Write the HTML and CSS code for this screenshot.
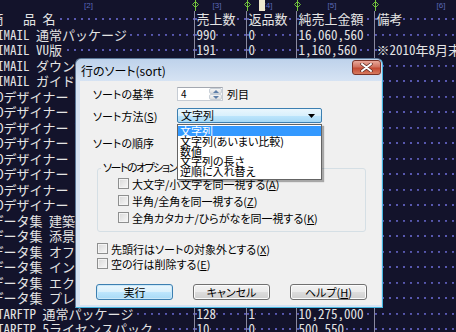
FILE: index.html
```html
<!DOCTYPE html>
<html lang="ja">
<head>
    <meta charset="UTF-8">
    <title>行のソート</title>
    <link rel="stylesheet" href="styles.css">
</head>
<body>
<div class="editor">
    <div class="ruler">
        <div class="seg c1">[2]<svg class="mark" width="9" height="11" viewBox="0 0 9 11"><path d="M4.5 0V11M4.5 1.5L7.5 4.5L4.5 7.5L1.5 4.5Z" fill="none" stroke="#72c43c" stroke-width="1"/></svg></div>
        <div class="seg c2">[3]<svg class="mark" width="9" height="11" viewBox="0 0 9 11"><path d="M4.5 0V11M4.5 1.5L7.5 4.5L4.5 7.5L1.5 4.5Z" fill="none" stroke="#72c43c" stroke-width="1"/></svg></div>
        <div class="seg c3"><span class="cursor"></span>[4]<svg class="mark" width="9" height="11" viewBox="0 0 9 11"><path d="M4.5 0V11M4.5 1.5L7.5 4.5L4.5 7.5L1.5 4.5Z" fill="none" stroke="#72c43c" stroke-width="1"/></svg></div>
        <div class="seg c4">[5]<svg class="mark" width="9" height="11" viewBox="0 0 9 11"><path d="M4.5 0V11M4.5 1.5L7.5 4.5L4.5 7.5L1.5 4.5Z" fill="none" stroke="#72c43c" stroke-width="1"/></svg></div>
        <div class="seg c5">[6]</div>
    </div>
    <div class="sheet">
        <div class="row"><div class="cell c1"><span>商　 品 名</span></div><div class="cell c2"><span>売上数</span></div><div class="cell c3"><span>返品数</span></div><div class="cell c4"><span>純売上金額</span></div><div class="cell c5"><span>備考</span></div></div>
        <div class="row"><div class="cell c1"><span> IMAIL 通常パッケージ</span></div><div class="cell c2"><span>990</span></div><div class="cell c3"><span>0</span></div><div class="cell c4"><span>16,060,560</span></div><div class="cell c5"></div></div>
        <div class="row"><div class="cell c1"><span> IMAIL VU版</span></div><div class="cell c2"><span>191</span></div><div class="cell c3"><span>0</span></div><div class="cell c4"><span>1,160,560</span></div><div class="cell c5"><span>※2010年8月末で販売終了</span></div></div>
        <div class="row"><div class="cell c1"><span> IMAIL ダウンロード版</span></div><div class="cell c2"><span>352</span></div><div class="cell c3"><span>0</span></div><div class="cell c4"><span>4,224,000</span></div><div class="cell c5"></div></div>
        <div class="row"><div class="cell c1"><span> IMAIL ガイドブック</span></div><div class="cell c2"><span>87</span></div><div class="cell c3"><span>2</span></div><div class="cell c4"><span>212,500</span></div><div class="cell c5"></div></div>
        <div class="row"><div class="cell c1"><span> Dデザイナー 通常版</span></div><div class="cell c2"><span>64</span></div><div class="cell c3"><span>0</span></div><div class="cell c4"><span>3,520,000</span></div><div class="cell c5"></div></div>
        <div class="row"><div class="cell c1"><span> Dデザイナー 学生版</span></div><div class="cell c2"><span>21</span></div><div class="cell c3"><span>0</span></div><div class="cell c4"><span>420,000</span></div><div class="cell c5"></div></div>
        <div class="row"><div class="cell c1"><span> Dデザイナー VU版</span></div><div class="cell c2"><span>45</span></div><div class="cell c3"><span>1</span></div><div class="cell c4"><span>1,100,000</span></div><div class="cell c5"></div></div>
        <div class="row"><div class="cell c1"><span> Dデザイナー 5ライセンス</span></div><div class="cell c2"><span>8</span></div><div class="cell c3"><span>0</span></div><div class="cell c4"><span>1,760,000</span></div><div class="cell c5"></div></div>
        <div class="row"><div class="cell c1"><span> Dデザイナー 10ライセンス</span></div><div class="cell c2"><span>3</span></div><div class="cell c3"><span>0</span></div><div class="cell c4"><span>1,200,000</span></div><div class="cell c5"></div></div>
        <div class="row"><div class="cell c1"><span> Dデザイナー 入門書</span></div><div class="cell c2"><span>110</span></div><div class="cell c3"><span>4</span></div><div class="cell c4"><span>312,000</span></div><div class="cell c5"></div></div>
        <div class="row"><div class="cell c1"><span> Dデザイナー 活用ガイド</span></div><div class="cell c2"><span>76</span></div><div class="cell c3"><span>0</span></div><div class="cell c4"><span>228,000</span></div><div class="cell c5"></div></div>
        <div class="row"><div class="cell c1"><span> Dデザイナー 素材集</span></div><div class="cell c2"><span>52</span></div><div class="cell c3"><span>0</span></div><div class="cell c4"><span>156,000</span></div><div class="cell c5"></div></div>
        <div class="row"><div class="cell c1"><span>データ集 建築パーツ</span></div><div class="cell c2"><span>58</span></div><div class="cell c3"><span>0</span></div><div class="cell c4"><span>580,000</span></div><div class="cell c5"></div></div>
        <div class="row"><div class="cell c1"><span>データ集 添景</span></div><div class="cell c2"><span>42</span></div><div class="cell c3"><span>0</span></div><div class="cell c4"><span>420,000</span></div><div class="cell c5"></div></div>
        <div class="row"><div class="cell c1"><span>データ集 オフィス</span></div><div class="cell c2"><span>35</span></div><div class="cell c3"><span>1</span></div><div class="cell c4"><span>340,000</span></div><div class="cell c5"></div></div>
        <div class="row"><div class="cell c1"><span>データ集 インテリア</span></div><div class="cell c2"><span>39</span></div><div class="cell c3"><span>0</span></div><div class="cell c4"><span>390,000</span></div><div class="cell c5"></div></div>
        <div class="row"><div class="cell c1"><span>データ集 エクステリア</span></div><div class="cell c2"><span>27</span></div><div class="cell c3"><span>0</span></div><div class="cell c4"><span>270,000</span></div><div class="cell c5"></div></div>
        <div class="row"><div class="cell c1"><span>データ集 プレゼン</span></div><div class="cell c2"><span>19</span></div><div class="cell c3"><span>0</span></div><div class="cell c4"><span>190,000</span></div><div class="cell c5"></div></div>
        <div class="row"><div class="cell c1"><span> TARFTP 通常パッケージ</span></div><div class="cell c2"><span>128</span></div><div class="cell c3"><span>1</span></div><div class="cell c4"><span>10,275,000</span></div><div class="cell c5"></div></div>
        <div class="row"><div class="cell c1"><span> TARFTP 5ライセンスパック</span></div><div class="cell c2"><span>10</span></div><div class="cell c3"><span>0</span></div><div class="cell c4"><span>500,550</span></div><div class="cell c5"></div></div>
    </div>
</div>

<div class="dialog">
    <div class="titlebar">
        <span class="title">行のソート(sort)</span>
        <span class="close"><svg width="13" height="9" viewBox="0 0 13 9"><path d="M2 1L11 8M11 1L2 8" stroke="#5a2a22" stroke-width="3.4" stroke-linecap="round"/><path d="M2 1L11 8M11 1L2 8" stroke="#fff" stroke-width="2" stroke-linecap="round"/></svg></span>
    </div>
    <div class="client">
        <div class="field f1">
            <span class="lbl">ソートの基準</span>
            <span class="spin"><span class="spin-val">4</span><span class="spin-btns"><i class="up"></i><i class="down"></i></span></span>
            <span class="unit">列目</span>
        </div>
        <div class="field f2">
            <span class="lbl">ソート方法(<u>S</u>)</span>
            <span class="combo focus">文字列<svg class="arrow" width="7" height="4" viewBox="0 0 7 4"><path d="M0 0H7L3.5 4Z" fill="#000"/></svg></span>
        </div>
        <div class="field f3">
            <span class="lbl">ソートの順序</span>
            <span class="combo">昇順</span>
        </div>
        <fieldset class="group">
            <legend>ソートのオプション</legend>
            <label class="check"><span class="box"></span>大文字/小文字を同一視する(<u>A</u>)</label>
            <label class="check"><span class="box"></span>半角/全角を同一視する(<u>Z</u>)</label>
            <label class="check"><span class="box"></span>全角カタカナ/ひらがなを同一視する(<u>K</u>)</label>
        </fieldset>
        <label class="check solo first"><span class="box"></span>先頭行はソートの対象外とする(<u>X</u>)</label>
        <label class="check solo"><span class="box"></span>空の行は削除する(<u>E</u>)</label>
        <div class="buttons">
            <span class="btn default">実行</span>
            <span class="btn">キャンセル</span>
            <span class="btn">ヘルプ(<u>H</u>)</span>
        </div>
        <ul class="droplist">
            <li class="sel">文字列</li>
            <li>文字列(あいまい比較)</li>
            <li>数値</li>
            <li>文字列の長さ</li>
            <li>逆順に入れ替え</li>
        </ul>
    </div>
</div>
</body>
</html>
```

FILE: styles.css
```css
/* General */
body {
    margin: 0;
    width: 456px;
    height: 332px;
    overflow: hidden;
    position: relative;
    background-color: #13132b;
}

/* Editor behind the dialog */
.editor {
    margin-left: -10px;
    color: #e4e4e4;
    font-family: "Noto Sans Mono CJK JP", "Noto Sans CJK JP", monospace;
    font-size: 13px;
    line-height: 15.5px;
}

.ruler {
    display: flex;
    height: 11px;
    font-family: "Liberation Sans", sans-serif;
    font-size: 8px;
    line-height: 11px;
    color: #5a68b8;
}

.seg {
    flex: none;
    position: relative;
    box-sizing: border-box;
    padding-right: 8px;
    text-align: center;
}

.c1 { width: 205px; }
.c2 { width: 52px; }
.c3 { width: 50px; }
.c4 { width: 78px; }
.c5 { width: 140px; }

.mark {
    position: absolute;
    top: 0;
    right: -5px;
}

.cursor {
    position: absolute;
    left: 12px;
    top: 0;
    width: 6px;
    height: 11px;
    background-color: #efe8cc;
}

.row {
    display: flex;
    height: 15.5px;
}

.cell {
    flex: none;
    box-sizing: border-box;
    padding-left: 1.5px;
    border-right: 1px solid #8a8aa0;
    white-space: pre;
    overflow: hidden;
    background-image: radial-gradient(circle at 1px 8px, #5858b0 0.9px, transparent 1.1px);
    background-size: 7px 15.5px;
}

.cell.c1 { padding-left: 0.5px; }
.cell.c5 { border-right: none; }

.cell span {
    background-color: #13132b;
}

/* Dialog */
.dialog {
    position: absolute;
    left: 75px;
    top: 58px;
    width: 308px;
    height: 250px;
    box-sizing: border-box;
    display: flex;
    flex-direction: column;
    border: 1px solid #5b7898;
    border-right-color: #45b6df;
    border-bottom-color: #45b6df;
    border-radius: 6px 6px 0 0;
    background: linear-gradient(#bed2eb, #d6e3f3 22px, #d6e3f3);
    padding: 0 1px 2px 4px;
    font-family: "Noto Sans CJK JP", sans-serif;
    font-size: 11px;
    font-feature-settings: "palt";
    color: #000;
}

.titlebar {
    height: 22px;
    display: flex;
    align-items: center;
    justify-content: space-between;
    flex: none;
}

.title {
    font-size: 12px;
    padding-left: 1px;
}

.close {
    width: 29px;
    height: 15px;
    margin-top: -5px;
    box-sizing: border-box;
    border: 1px solid #7a3328;
    border-radius: 3px;
    background: linear-gradient(#e9a89a, #d0725f 45%, #c24a33 55%, #d77a5e);
    display: flex;
    align-items: center;
    justify-content: center;
}

.client {
    flex: 1;
    position: relative;
    background-color: #f0f0f0;
    padding: 6px 0 0 13px;
}

.field {
    display: flex;
    align-items: center;
}

.lbl {
    width: 84px;
    flex: none;
}

.f1 { height: 14px; }
.f2 { height: 15px; margin-top: 7px; }
.f3 { height: 15px; margin-top: 12px; }

.spin {
    width: 46px;
    height: 14px;
    box-sizing: border-box;
    border: 1px solid #c6ccd4;
    border-top-color: #a4a8b0;
    background-color: #fff;
    display: flex;
    justify-content: space-between;
    font-size: 10px;
    line-height: 12px;
}

.spin-val {
    padding-left: 3px;
}

.spin-btns {
    width: 13px;
    display: flex;
    flex-direction: column;
}

.spin-btns i {
    flex: 1;
    border: 1px solid #c9d0d8;
    border-radius: 2px;
    background: linear-gradient(#f6f6f6, #dedede);
    position: relative;
}

.spin-btns i::after {
    content: "";
    position: absolute;
    left: 3px;
    top: 1px;
    border-left: 3px solid transparent;
    border-right: 3px solid transparent;
}

.spin-btns .up::after { border-bottom: 3px solid #5d7ea8; }
.spin-btns .down::after { border-top: 3px solid #5d7ea8; }

.unit {
    margin-left: 4px;
}

.combo {
    width: 145px;
    height: 15px;
    box-sizing: border-box;
    border: 1px solid #a8a8a8;
    border-radius: 2px;
    background: linear-gradient(#f4f4f4, #e2e2e2);
    padding-left: 3px;
    line-height: 13px;
    display: flex;
    justify-content: space-between;
    align-items: center;
}

.combo.focus {
    border-color: #3c7fb1;
    background: linear-gradient(#eaf6fd, #d9f0fc 50%, #bee6fd 50%, #a7d9f5);
}

.arrow {
    margin-right: 6px;
}

.group {
    margin: 12px 0 0 4px;
    width: 269px;
    box-sizing: border-box;
    padding: 0 0 5px 20px;
    border: 1px solid #d5dfe5;
    border-radius: 3px;
}

.group legend {
    padding: 0 2px 3px;
    margin-left: -17px;
    line-height: 10px;
    letter-spacing: -1.5px;
}

.check {
    display: flex;
    align-items: center;
    height: 17px;
}

.check.solo {
    height: 15px;
    margin-left: 4px;
}

.check.first {
    margin-top: 9px;
}

.box {
    width: 11px;
    height: 11px;
    box-sizing: border-box;
    flex: none;
    margin-right: 3px;
    border: 1px solid #8e8f8f;
    background: linear-gradient(135deg, #d8d8d8, #f8f8f8);
    box-shadow: inset 0 0 0 1px #f4f4f4;
}

.buttons {
    display: flex;
    gap: 20px;
    margin: 13px 0 0 3px;
}

.btn {
    width: 77px;
    height: 16px;
    box-sizing: border-box;
    border: 1px solid #707070;
    border-radius: 3px;
    background: linear-gradient(#f2f2f2, #ebebeb 50%, #dddddd 50%, #cfcfcf);
    box-shadow: inset 0 0 0 1px #fcfcfc;
    text-align: center;
    line-height: 14px;
}

.btn.default {
    border-color: #3c7fb1;
    background: linear-gradient(#eaf6fd, #d9f0fc 50%, #bee6fd 50%, #a7d9f5);
    box-shadow: inset 0 0 0 1px #cbe8f8;
}

/* Open combo list */
.droplist {
    position: absolute;
    left: 97px;
    top: 43px;
    width: 145px;
    box-sizing: border-box;
    margin: 0;
    padding: 1px 0 3px;
    list-style: none;
    border: 1px solid #646464;
    background-color: #fff;
    box-shadow: 2px 2px 1px rgba(0, 0, 0, 0.3);
}

.droplist li {
    height: 10px;
    line-height: 10px;
    padding-left: 2px;
}

.droplist li.sel {
    background-color: #3399ff;
    color: #fff;
}
```
